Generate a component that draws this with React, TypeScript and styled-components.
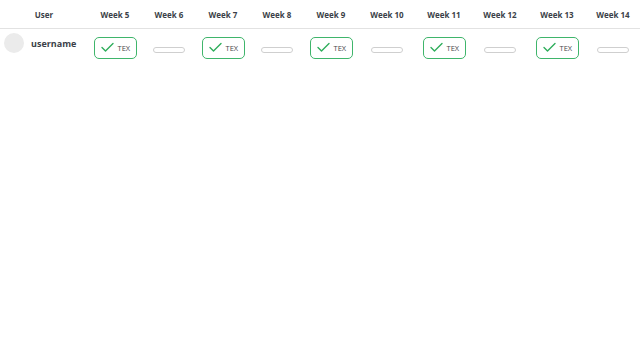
import React from "react"
import styled, { createGlobalStyle } from "styled-components"

const WEEKS = [
  { label: "Week 5", done: true, width: 54 },
  { label: "Week 6", done: false, width: 54 },
  { label: "Week 7", done: true, width: 54 },
  { label: "Week 8", done: false, width: 54 },
  { label: "Week 9", done: true, width: 54 },
  { label: "Week 10", done: false, width: 58 },
  { label: "Week 11", done: true, width: 56 },
  { label: "Week 12", done: false, width: 56 },
  { label: "Week 13", done: true, width: 58 },
  { label: "Week 14", done: false, width: 54 },
]

const GlobalStyle = createGlobalStyle`
  body {
    margin: 0;
    background: #fff;
    font-family: "Open Sans", "Noto Sans", sans-serif;
  }
`

const Table = styled.table`
  width: 640px;
  border-collapse: collapse;
  table-layout: fixed;
`

const Col = styled.col<{ $width: number }>`
  width: ${p => p.$width}px;
`

const HeadCell = styled.th`
  height: 28px;
  padding: 0;
  border-bottom: 1px solid #e2e2e2;
  font-size: 8px;
  font-weight: 700;
  color: #3b3f48;
  text-align: center;
  vertical-align: middle;
`

const Cell = styled.td<{ $top?: number }>`
  padding: ${p => p.$top ?? 7}px 0 0;
  text-align: center;
  vertical-align: top;
`

const UserBox = styled.div`
  display: flex;
  align-items: center;
  gap: 7px;
  padding-left: 4px;
`

const Avatar = styled.div`
  width: 20px;
  height: 20px;
  border-radius: 50%;
  background: #ebebeb;
  flex-shrink: 0;
`

const UserName = styled.span`
  font-size: 9px;
  font-weight: 700;
  color: #3b3f48;
`

const Badge = styled.div`
  display: inline-flex;
  align-items: center;
  gap: 4px;
  box-sizing: border-box;
  width: 43px;
  height: 22px;
  padding: 0 0 0 6px;
  border: 1px solid #3fb56b;
  border-radius: 5px;
  font-size: 7.5px;
  color: #4a4a4a;
`

const EmptyPill = styled.div`
  display: inline-block;
  box-sizing: border-box;
  width: 32px;
  height: 6px;
  margin-top: 9px;
  border: 1px solid #cfcfcf;
  border-radius: 3px;
  background: #fff;
`

const Check = () => (
  <svg width="13" height="11" viewBox="0 0 13 11" fill="none">
    <path d="M1 5.5 L4.5 9 L12 1.5" stroke="#2fae5c" strokeWidth="1.4" strokeLinecap="round" strokeLinejoin="round" />
  </svg>
)

const App = () => (
  <>
    <GlobalStyle />
    <Table>
      <colgroup>
        <Col $width={88} />
        {WEEKS.map(week => (
          <Col key={week.label} $width={week.width} />
        ))}
      </colgroup>
      <thead>
        <tr>
          <HeadCell>User</HeadCell>
          {WEEKS.map(week => (
            <HeadCell key={week.label}>{week.label}</HeadCell>
          ))}
        </tr>
      </thead>
      <tbody>
        <tr>
          <Cell $top={4}>
            <UserBox>
              <Avatar />
              <UserName>username</UserName>
            </UserBox>
          </Cell>
          {WEEKS.map(week => (
            <Cell key={week.label}>
              {week.done ? (
                <Badge>
                  <Check />
                  TEX
                </Badge>
              ) : (
                <EmptyPill />
              )}
            </Cell>
          ))}
        </tr>
      </tbody>
    </Table>
  </>
)

export default App
